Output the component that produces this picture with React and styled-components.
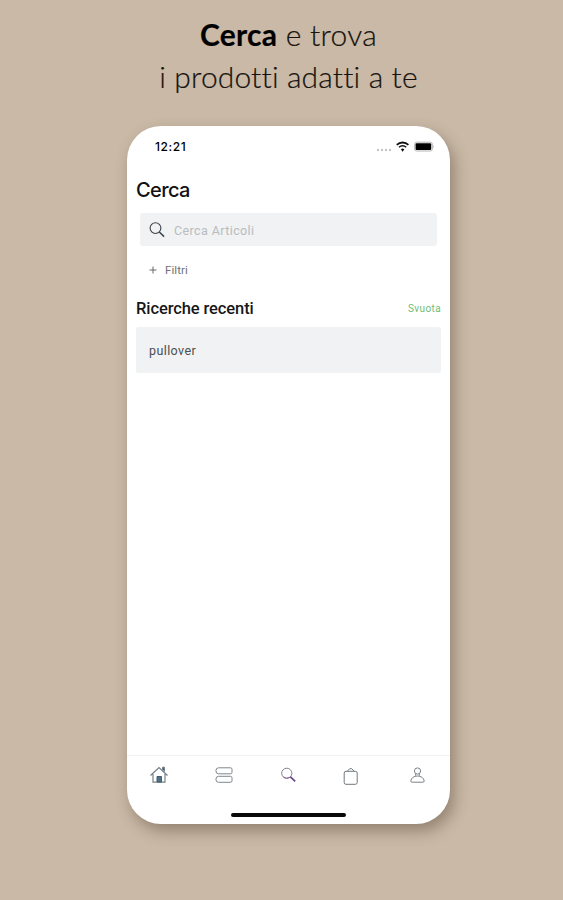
import React from "react";
import styled, { createGlobalStyle } from "styled-components";

const GlobalStyle = createGlobalStyle`
  * {
    box-sizing: border-box;
  }

  body {
    margin: 0;
    background: #c9b9a6;
    overflow: hidden;
  }
`;

const Page = styled.main`
  height: 900px;
  display: flex;
  flex-direction: column;
  align-items: center;
  padding: 13px 0 0 14px;
  background: #c9b9a6;
  font-family: Roboto, sans-serif;
`;

const Headline = styled.h1`
  width: 100%;
  height: 113px;
  margin: 0;
  text-align: center;
  font-family: Lato, sans-serif;
  font-size: 30px;
  font-weight: 300;
  line-height: 42px;
  color: #17120e;
  -webkit-text-stroke: 0.2px #17120e;
`;

const HeadlineRow = styled.span`
  display: block;
  white-space: nowrap;
  letter-spacing: ${(props) => props.$spacing};

  strong {
    font-weight: 700;
    color: #000000;
  }
`;

const Phone = styled.div`
  width: 323px;
  height: 698px;
  display: flex;
  flex-direction: column;
  background: #ffffff;
  border-radius: 34px;
  overflow: hidden;
  box-shadow: 4px 7px 15px rgba(75, 55, 38, 0.42);
`;

const StatusBar = styled.div`
  height: 42px;
  display: flex;
  align-items: center;
  justify-content: space-between;
  padding: 0 15px 0 28px;
`;

const Time = styled.span`
  padding-bottom: 1px;
  font-family: Inter, sans-serif;
  font-size: 12px;
  font-weight: 500;
  letter-spacing: 0.6px;
  color: #000000;
`;

const StatusIcons = styled.div`
  display: flex;
  align-items: center;
`;

const Content = styled.div`
  flex: 1;
  padding: 0 9px;
`;

const Title = styled.h2`
  height: 45px;
  margin: 0;
  font-family: Inter, sans-serif;
  font-size: 20px;
  font-weight: 500;
  line-height: 44px;
  letter-spacing: -0.6px;
  color: #111111;
`;

const SearchBox = styled.label`
  height: 33px;
  display: flex;
  align-items: center;
  gap: 9px;
  margin: 0 4px;
  padding: 0 9px;
  background: #f0f2f3;
  border-radius: 3px;
`;

const SearchInput = styled.input`
  flex: 1;
  min-width: 0;
  padding: 2px 0 0;
  border: 0;
  outline: 0;
  background: transparent;
  font-family: Roboto, sans-serif;
  font-size: 12.5px;
  letter-spacing: 0.4px;

  &::placeholder {
    color: #b9bcbf;
  }
`;

const Filters = styled.button`
  height: 48px;
  display: flex;
  align-items: center;
  gap: 8px;
  padding: 0 0 0 13px;
  border: 0;
  background: none;
  font-family: Roboto, sans-serif;
  font-size: 11.5px;
  letter-spacing: 0.1px;
  color: #707275;
`;

const RecentHeader = styled.div`
  height: 33px;
  display: flex;
  align-items: center;
  justify-content: space-between;
  padding-bottom: 4px;
`;

const RecentTitle = styled.h3`
  margin: 0;
  font-size: 16.5px;
  font-weight: 500;
  letter-spacing: -0.1px;
  color: #171717;
`;

const ClearButton = styled.button`
  padding: 0;
  border: 0;
  background: none;
  font-family: Roboto, sans-serif;
  font-size: 10px;
  letter-spacing: 0.4px;
  color: #6fbd76;
`;

const RecentItem = styled.div`
  width: 305px;
  height: 46px;
  display: flex;
  align-items: center;
  padding: 0 13px;
  background: #f0f2f3;
  border-radius: 2px;
  font-size: 12.5px;
  letter-spacing: 0.4px;
  color: #4c4e50;
`;

const TabBar = styled.nav`
  height: 69px;
  border-top: 1px solid #f0f1f1;
`;

const Tabs = styled.div`
  height: 57px;
  display: flex;
  justify-content: space-between;
  padding: 8px 22px 0;
`;

const Tab = styled.button`
  width: 20px;
  height: 22px;
  display: flex;
  align-items: center;
  justify-content: center;
  padding: 0;
  border: 0;
  background: none;
`;

const HomeIndicator = styled.div`
  width: 115px;
  height: 4px;
  margin: 0 auto;
  background: #090909;
  border-radius: 2px;
`;

const SignalIcon = () => (
  <svg width="16" height="12" viewBox="0 0 16 12" fill="#c4c4c4">
    <circle cx="2" cy="9" r="1.2" />
    <circle cx="6" cy="9" r="1.2" />
    <circle cx="10" cy="9" r="1.2" />
    <circle cx="14" cy="9" r="1.2" />
  </svg>
);

const WifiIcon = () => (
  <svg width="18" height="12" viewBox="-4 0.5 18 12" fill="none" stroke="#111111">
    <path d="M.8 4.4C4 1.2 9.2 1.2 12.4 4.4" strokeWidth="1.8" />
    <path d="M3 6.8c2-2 5.2-2 7.2 0" strokeWidth="1.4" />
    <path d="M4.9 8.7q1.7-1.3 3.4 0l-1.7 2.5z" fill="#111111" stroke="none" />
  </svg>
);

const BatteryIcon = () => (
  <svg width="25" height="12" viewBox="-4 0.5 25 12">
    <rect
      x="0.7"
      y="1.7"
      width="17.6"
      height="8.8"
      rx="2"
      fill="none"
      stroke="#b4b4b4"
    />
    <rect x="1.6" y="2.7" width="15.6" height="6.8" rx="1" fill="#000000" />
    <path d="M19.4 4.6v3q1.2-1.5 0-3z" fill="#999999" />
  </svg>
);

const SearchIcon = () => (
  <svg width="16" height="16" viewBox="0 0 16 16" fill="none" stroke="#3b444b">
    <circle cx="6.5" cy="6.1" r="5.4" strokeWidth="1.1" />
    <path d="M10.3 10l4.8 4.6" strokeWidth="1.5" />
  </svg>
);

const PlusIcon = () => (
  <svg width="8" height="8" viewBox="0 0 8 8" stroke="#66696c">
    <path d="M4 .5v7M.5 4h7" />
  </svg>
);

const HomeIcon = () => (
  <svg width="20" height="20" viewBox="0 0 20 20" fill="none" stroke="#74818a">
    <path d="M1.5 10.5L10 2.5l8.5 8M4 9v8.2h12V9" strokeWidth="1.2" />
    <path d="M13.5 4.8V2.2h2v4.4" fill="#53616a" />
    <path d="M8 17v-5.5h4.5V17z" fill="#547084" stroke="#455d6e" />
  </svg>
);

const ListIcon = () => (
  <svg width="20" height="20" viewBox="0 0 20 20" fill="none" stroke="#7e878c">
    <path d="M4.5 2.8h12q1.5 0 1.5 1.5v3q0 1.5-1.5 1.5h-12Q1.9 8.8 1.9 5.8t2.6-3z" />
    <path d="M4.5 11.3h12q1.5 0 1.5 1.5v3q0 1.5-1.5 1.5h-12q-2.6 0-2.6-3t2.6-3z" />
  </svg>
);

const ActiveSearchIcon = () => (
  <svg width="18" height="18" viewBox="0 0 18 18" fill="none">
    <circle cx="6.8" cy="7.3" r="5.1" stroke="#858090" />
    <path d="M3.4 11q3.2 2.4 7 0" stroke="#8a6c9c" />
    <path d="M10.4 10.8l4.8 4.6" stroke="#6b4589" strokeWidth="1.7" />
  </svg>
);

const BagIcon = () => (
  <svg width="20" height="20" viewBox="2.5 -1.5 20 20" fill="none" stroke="#70787d">
    <rect x="3.7" y="4.8" width="13" height="13" rx="1.8" />
    <path d="M6.8 4.7L9.2 2.2h2l2.4 2.5" />
  </svg>
);

const UserIcon = () => (
  <svg width="20" height="20" viewBox="0 0 20 20" fill="none" stroke="#7c8388">
    <circle cx="9.5" cy="6" r="3.1" />
    <path d="M7.7 8.6v2.2M11.3 8.6v2.2" />
    <path d="M2.8 16c.3-3 3-5 6.7-5s6.4 2 6.7 5q0 1.2-1.3 1.2H4.1q-1.3 0-1.3-1.2z" />
  </svg>
);

const tabs = [
  { label: "Home", icon: <HomeIcon /> },
  { label: "Categorie", icon: <ListIcon /> },
  { label: "Cerca", icon: <ActiveSearchIcon /> },
  { label: "Carrello", icon: <BagIcon /> },
  { label: "Profilo", icon: <UserIcon /> },
];

const App = () => {
  return (
    <>
      <GlobalStyle />
      <Page>
        <Headline>
          <HeadlineRow $spacing="0.25px">
            <strong>Cerca</strong> e trova
          </HeadlineRow>
          <HeadlineRow $spacing="0.13px">i prodotti adatti a te</HeadlineRow>
        </Headline>
        <Phone>
          <StatusBar>
            <Time>12:21</Time>
            <StatusIcons>
              <SignalIcon />
              <WifiIcon />
              <BatteryIcon />
            </StatusIcons>
          </StatusBar>
          <Content>
            <Title>Cerca</Title>
            <SearchBox>
              <SearchIcon />
              <SearchInput placeholder="Cerca Articoli" />
            </SearchBox>
            <Filters>
              <PlusIcon />
              Filtri
            </Filters>
            <RecentHeader>
              <RecentTitle>Ricerche recenti</RecentTitle>
              <ClearButton>Svuota</ClearButton>
            </RecentHeader>
            <RecentItem>pullover</RecentItem>
          </Content>
          <TabBar>
            <Tabs>
              {tabs.map((tab) => (
                <Tab key={tab.label} aria-label={tab.label}>
                  {tab.icon}
                </Tab>
              ))}
            </Tabs>
            <HomeIndicator />
          </TabBar>
        </Phone>
      </Page>
    </>
  );
};

export default App;
